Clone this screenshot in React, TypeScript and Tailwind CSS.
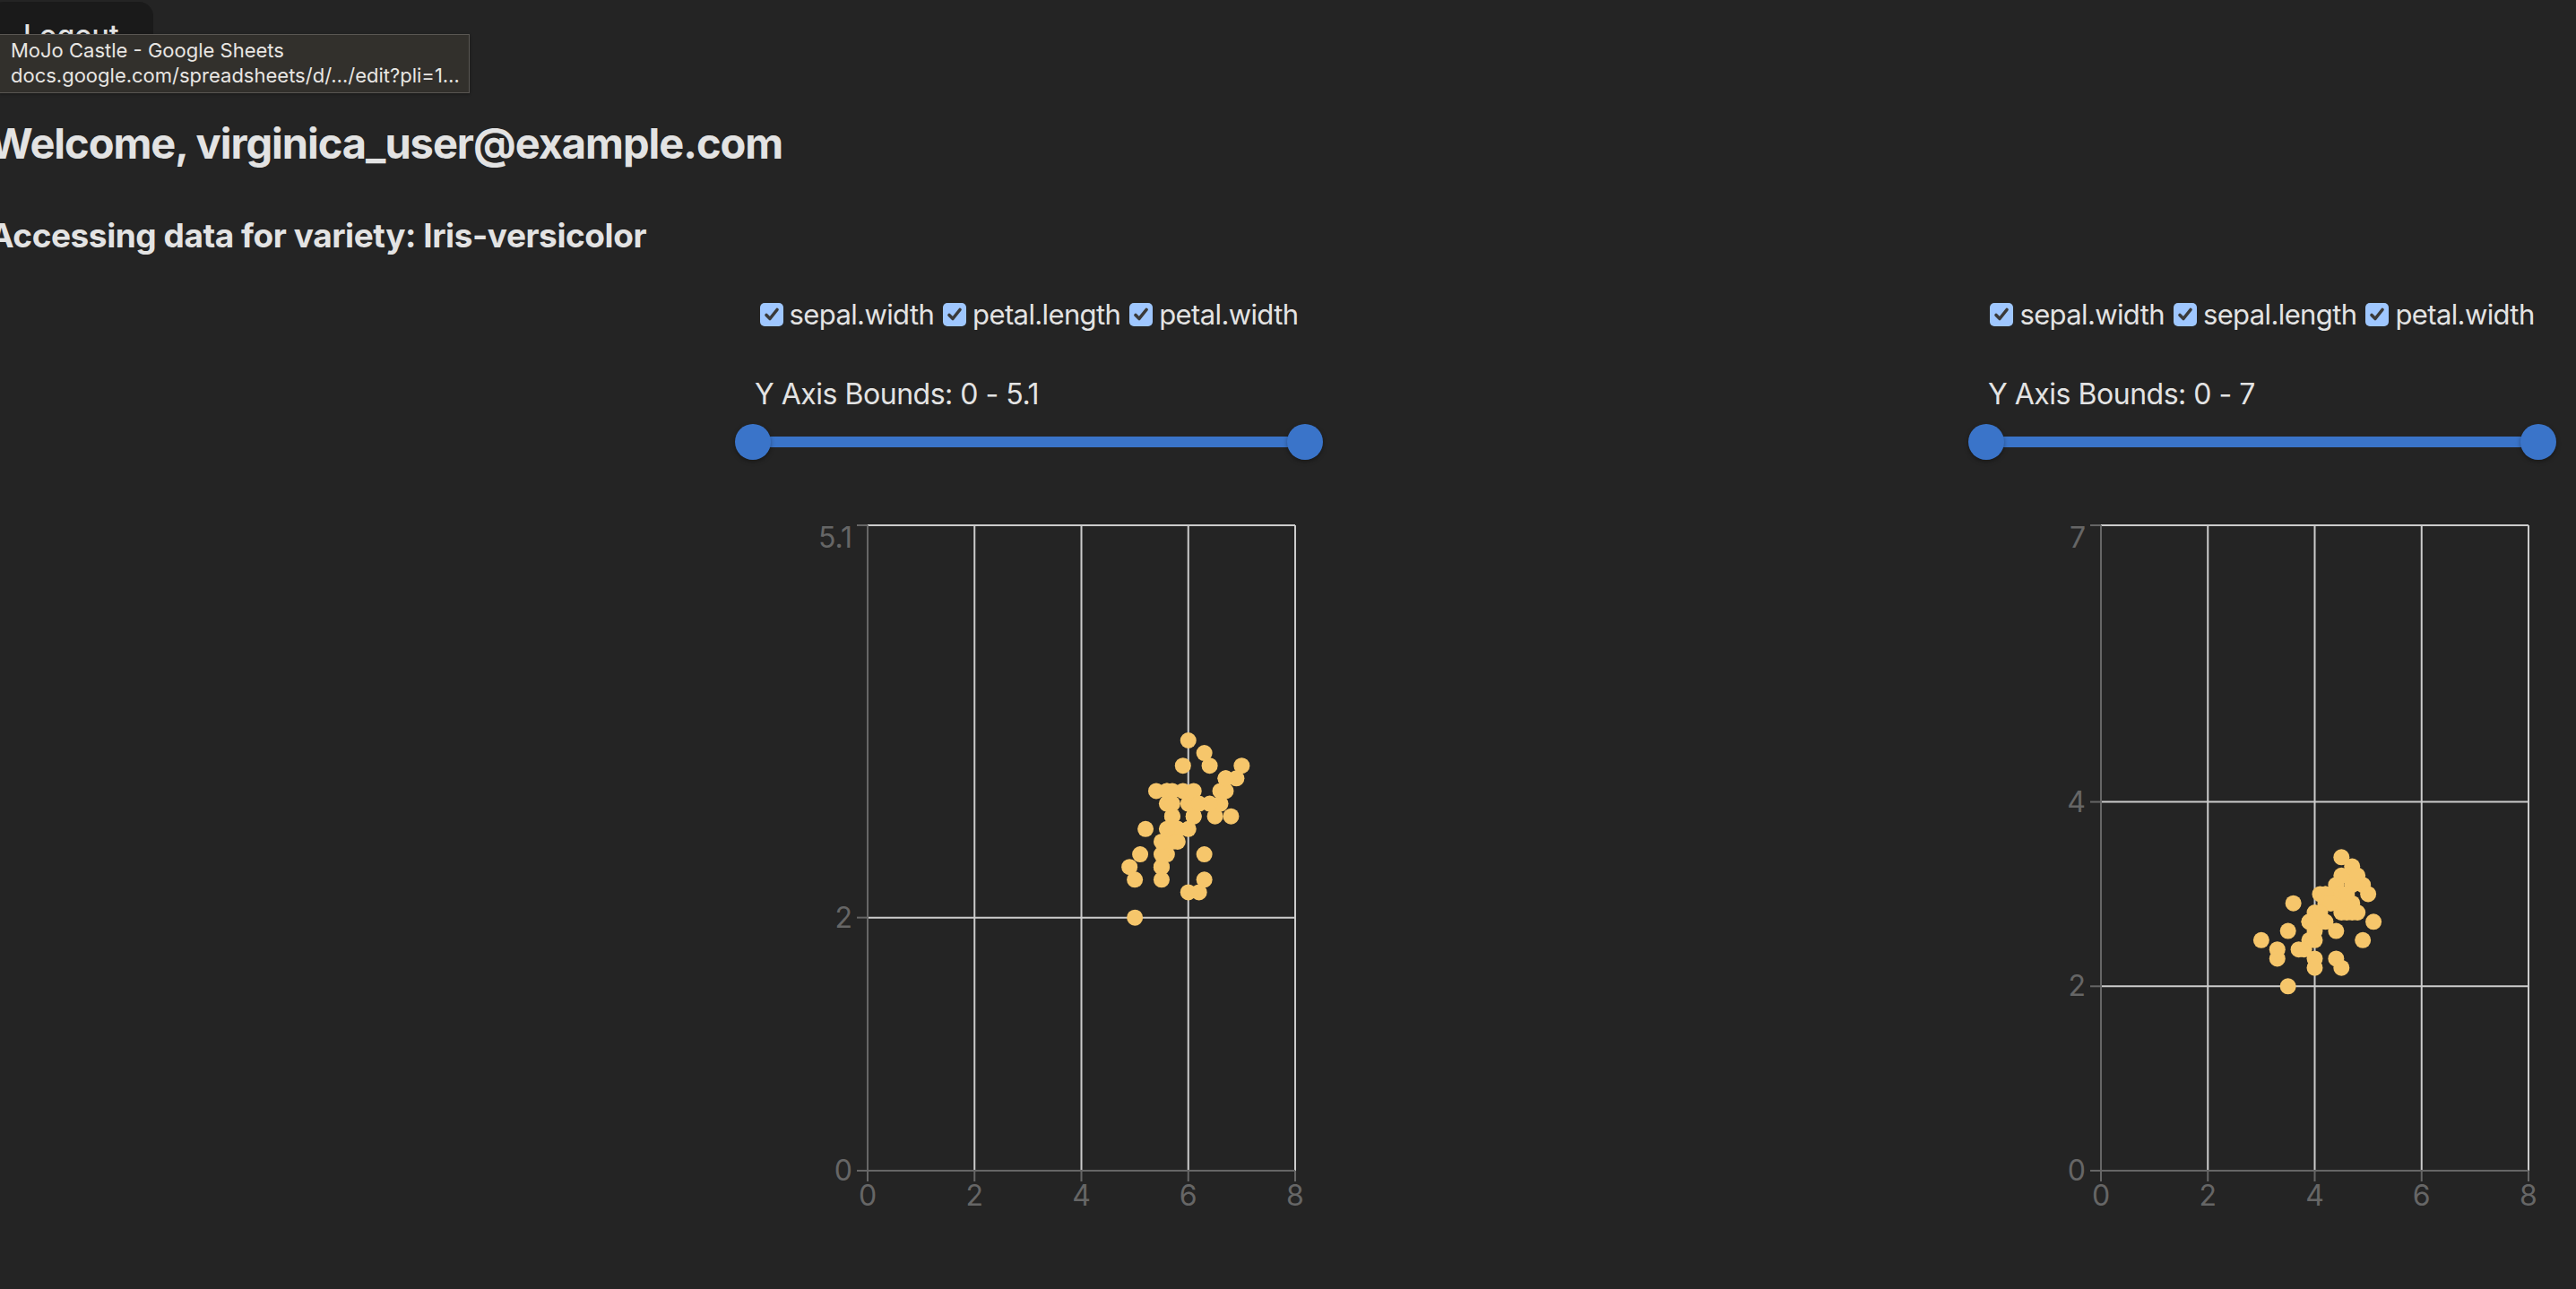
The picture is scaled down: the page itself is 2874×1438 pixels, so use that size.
import React from 'react';

// iris versicolor: sepal.length, sepal.width, petal.length, petal.width
type IrisRow = [number, number, number, number];

const VERSICOLOR: IrisRow[] = [
  [7.0, 3.2, 4.7, 1.4], [6.4, 3.2, 4.5, 1.5], [6.9, 3.1, 4.9, 1.5], [5.5, 2.3, 4.0, 1.3],
  [6.5, 2.8, 4.6, 1.5], [5.7, 2.8, 4.5, 1.3], [6.3, 3.3, 4.7, 1.6], [4.9, 2.4, 3.3, 1.0],
  [6.6, 2.9, 4.6, 1.3], [5.2, 2.7, 3.9, 1.4], [5.0, 2.0, 3.5, 1.0], [5.9, 3.0, 4.2, 1.5],
  [6.0, 2.2, 4.0, 1.0], [6.1, 2.9, 4.7, 1.4], [5.6, 2.9, 3.6, 1.3], [6.7, 3.1, 4.4, 1.4],
  [5.6, 3.0, 4.5, 1.5], [5.8, 2.7, 4.1, 1.0], [6.2, 2.2, 4.5, 1.5], [5.6, 2.5, 3.9, 1.1],
  [5.9, 3.2, 4.8, 1.8], [6.1, 2.8, 4.0, 1.3], [6.3, 2.5, 4.9, 1.5], [6.1, 2.8, 4.7, 1.2],
  [6.4, 2.9, 4.3, 1.3], [6.6, 3.0, 4.4, 1.4], [6.8, 2.8, 4.8, 1.4], [6.7, 3.0, 5.0, 1.7],
  [6.0, 2.9, 4.5, 1.5], [5.7, 2.6, 3.5, 1.0], [5.5, 2.4, 3.8, 1.1], [5.5, 2.4, 3.7, 1.0],
  [5.8, 2.7, 3.9, 1.2], [6.0, 2.7, 5.1, 1.6], [5.4, 3.0, 4.5, 1.5], [6.0, 3.4, 4.5, 1.6],
  [6.7, 3.1, 4.7, 1.5], [6.3, 2.3, 4.4, 1.3], [5.6, 3.0, 4.1, 1.3], [5.5, 2.5, 4.0, 1.3],
  [5.5, 2.6, 4.4, 1.2], [6.1, 3.0, 4.6, 1.4], [5.8, 2.6, 4.0, 1.2], [5.0, 2.3, 3.3, 1.0],
  [5.6, 2.7, 4.2, 1.3], [5.7, 3.0, 4.2, 1.2], [5.7, 2.9, 4.2, 1.3], [6.2, 2.9, 4.3, 1.3],
  [5.1, 2.5, 3.0, 1.1], [5.7, 2.8, 4.1, 1.3],
];

const X_TICKS = [0, 2, 4, 6, 8];

interface PanelConfig {
  columns: string[];
  xIndex: number;
  yMax: number;
  yTicks: number[];
}

const PANELS: PanelConfig[] = [
  { columns: ['sepal.width', 'petal.length', 'petal.width'], xIndex: 0, yMax: 5.1, yTicks: [0, 2, 5.1] },
  { columns: ['sepal.width', 'sepal.length', 'petal.width'], xIndex: 2, yMax: 7, yTicks: [0, 2, 4, 7] },
];

const CheckItem: React.FC<{ label: string }> = ({ label }) => (
  <label className="flex items-center gap-[7px]">
    <span className="flex h-[26px] w-[26px] items-center justify-center rounded-[5px] bg-[#9fc7ff]">
      <svg viewBox="0 0 26 26" className="h-[26px] w-[26px]">
        <path d="M7 13.5 L11 17.5 L19 7.5" fill="none" stroke="#3a3a3a" strokeWidth="3.6" strokeLinecap="round" strokeLinejoin="round" />
      </svg>
    </span>
    <span>{label}</span>
  </label>
);

const RangeSlider: React.FC = () => (
  <div className="relative mt-[13px] h-[40px] w-full">
    <div className="absolute left-[20px] right-[20px] top-[14px] h-[12px] bg-[#3a74c9]" />
    <div className="absolute left-0 top-0 h-[40px] w-[40px] rounded-full bg-[#3a74c9] shadow-[0_2px_5px_rgba(0,0,0,0.35)]" />
    <div className="absolute right-0 top-0 h-[40px] w-[40px] rounded-full bg-[#3a74c9] shadow-[0_2px_5px_rgba(0,0,0,0.35)]" />
  </div>
);

const ScatterPlot: React.FC<{ config: PanelConfig }> = ({ config }) => {
  const W = 656;
  const H = 800;
  const L = 148;
  const R = 625;
  const T = 26;
  const B = 746;
  const sx = (v: number) => L + ((R - L) * v) / 8;
  const sy = (v: number) => B - ((B - T) * v) / config.yMax;
  const font = { fontFamily: 'Inter, sans-serif', fontSize: 32 };

  return (
    <svg width={W} height={H} className="mt-[47px] block">
      {/* grid */}
      {config.yTicks.filter((t) => t > 0).map((t) => (
        <line key={`h${t}`} x1={L} x2={R} y1={sy(t)} y2={sy(t)} stroke="#ccc" strokeWidth={2} />
      ))}
      {X_TICKS.filter((t) => t > 0).map((t) => (
        <line key={`v${t}`} x1={sx(t)} x2={sx(t)} y1={T} y2={B} stroke="#ccc" strokeWidth={2} />
      ))}
      {/* axes */}
      <line x1={L} x2={L} y1={T} y2={B} stroke="#666" strokeWidth={2} />
      <line x1={L} x2={R} y1={B} y2={B} stroke="#666" strokeWidth={2} />
      {config.yTicks.map((t) => (
        <g key={`yt${t}`}>
          <line x1={L - 12} x2={L} y1={sy(t)} y2={sy(t)} stroke="#666" strokeWidth={2} />
          <text x={L - 17} y={t === config.yMax ? T + 25 : sy(t) + 11} textAnchor="end" fill="#666" style={font}>
            {t}
          </text>
        </g>
      ))}
      {X_TICKS.map((t) => (
        <g key={`xt${t}`}>
          <line x1={sx(t)} x2={sx(t)} y1={B} y2={B + 12} stroke="#666" strokeWidth={2} />
          <text x={sx(t)} y={B + 39} textAnchor="middle" fill="#666" style={font}>
            {t}
          </text>
        </g>
      ))}
      {/* points */}
      {VERSICOLOR.map((row, i) => (
        <circle key={i} cx={sx(row[config.xIndex])} cy={sy(row[1])} r={9} fill="#f6c66b" />
      ))}
    </svg>
  );
};

const Panel: React.FC<{ config: PanelConfig }> = ({ config }) => (
  <div className="flex w-[656px] flex-col">
    <div className="flex h-[40px] items-center justify-center gap-[10px] text-[31px] leading-[40px] tracking-[-0.02em]">
      {config.columns.map((c) => (
        <CheckItem key={c} label={c} />
      ))}
    </div>
    <div className="mt-[49px] pl-[22px] text-[32px] leading-[40px] tracking-[-0.015em]">
      Y Axis Bounds: 0 - {config.yMax}
    </div>
    <RangeSlider />
    <ScatterPlot config={config} />
  </div>
);

const App: React.FC = () => {
  return (
    <div className="relative h-[1438px] w-[2874px] overflow-hidden bg-[#242424] font-['Inter','Noto_Sans',sans-serif] text-[#e3e3e3]">
      <div className="ml-[-12px]">
        <button className="mt-[2px] block h-[76px] rounded-[16px] bg-[#1a1a1a] px-[38px] text-[32px] font-medium">
          Logout
        </button>
        <h2 className="mt-[52px] text-[47px] font-bold leading-[60px] tracking-[-0.022em]">
          Welcome, virginica_user@example.com
        </h2>
        <h3 className="mt-[49px] text-[37px] font-bold leading-[48px] tracking-[-0.012em]">
          Accessing data for variety: Iris-versicolor
        </h3>
      </div>

      <div className="mt-[44px] flex gap-[720px] pl-[820px]">
        {PANELS.map((p, i) => (
          <Panel key={i} config={p} />
        ))}
      </div>

      {/* browser link preview bubble */}
      <div className="absolute left-[-1px] top-[38px] h-[66px] w-[525px] border border-[#5a5753] bg-[#32302c] px-[12px] pt-[3px] text-[22px] leading-[28px] text-[#e8e6e3] shadow-[0_1px_3px_rgba(0,0,0,0.4)]">
        <div>MoJo Castle - Google Sheets</div>
        <div className="whitespace-nowrap">docs.google.com/spreadsheets/d/…/edit?pli=1…</div>
      </div>
    </div>
  );
};

export default App;
